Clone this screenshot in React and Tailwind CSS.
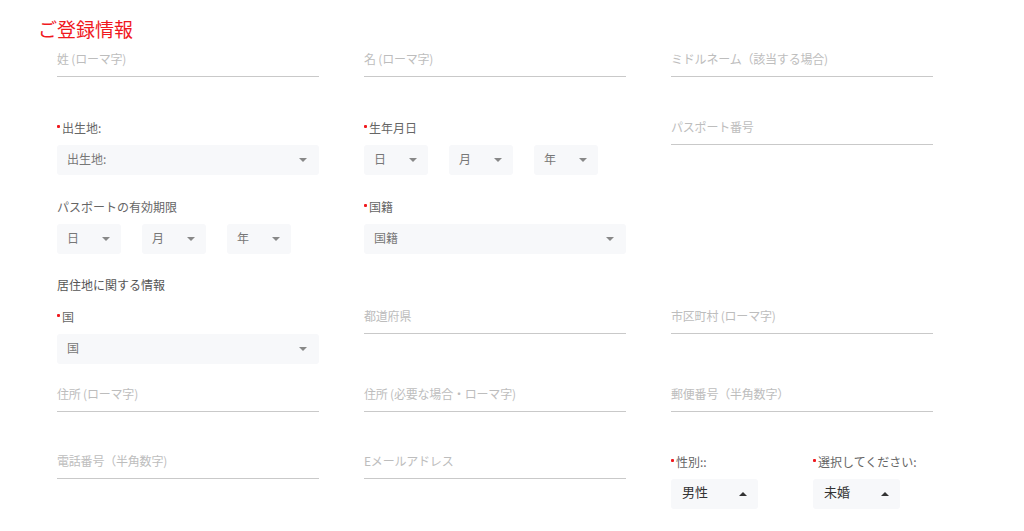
import React from "react";

const font = { fontFamily: '"Noto Sans CJK JP", "Noto Sans", sans-serif' };

const Caret = ({ up }) => (
  <span
    className={`inline-block w-0 h-0 border-l-[4px] border-r-[4px] border-l-transparent border-r-transparent ${
      up ? "border-b-[4px] border-b-[#333]" : "border-t-[4px] border-t-[#888]"
    }`}
  />
);

const Line = ({ text }) => (
  <div className="h-[33px] flex items-center pb-[2px] border-b border-[#c9c9c9] text-[12px] tracking-[-0.2px] text-[#bdbdbd]">
    {text}
  </div>
);

const Label = ({ text, req }) => (
  <div className="h-[33px] flex items-center pb-[2px] text-[12px] text-[#666]">
    {req && <span className="inline-block w-[3px] h-[3px] rounded-[1px] bg-[#f0191e] mr-[2px] -mt-[3px]" />}
    {text}
  </div>
);

const Select = ({ text, w = "w-full", pr = "pr-[12px]" }) => (
  <div className={`${w} h-[30px] bg-[#f7f8fa] rounded-[3px] flex items-center justify-between pb-[3px] pl-[10px] ${pr} text-[12px] text-[#777]`}>
    <span>{text}</span>
    <span className="pt-[3px] flex">
      <Caret />
    </span>
  </div>
);

const Dates = () => (
  <div className="flex gap-[21px]">
    {["日", "月", "年"].map((t) => (
      <Select key={t} text={t} w="w-[64px]" pr="pr-[11px]" />
    ))}
  </div>
);

const SmallSelect = ({ text }) => (
  <div className="w-[87px] h-[30px] bg-[#f7f8fa] rounded-[3px] flex items-center justify-between pl-[11px] pr-[11px] text-[13px] text-[#333]">
    <span className="pb-[4px]">{text}</span>
    <Caret up />
  </div>
);

const Row = ({ className = "", children }) => (
  <div className={`grid grid-cols-[262px_262px_262px] gap-x-[45px] items-start ${className}`}>{children}</div>
);

export default function App() {
  return (
    <div className="w-[1024px] h-[531px] bg-white overflow-hidden pt-[15px] px-[38px]" style={font}>
      <h1 className="h-[28px] leading-[28px] text-[19px] text-[#f0191e]">ご登録情報</h1>
      <div className="ml-[19px]">
        <Row className="mt-[1px]">
          <Line text="姓 (ローマ字)" />
          <Line text="名 (ローマ字)" />
          <Line text="ミドルネーム（該当する場合)" />
        </Row>
        <Row className="mt-[35px]">
          <div>
            <Label text="出生地:" req />
            <Select text="出生地:" />
          </div>
          <div>
            <Label text="生年月日" req />
            <Dates />
          </div>
          <Line text="パスポート番号" />
        </Row>
        <Row className="mt-[16px]">
          <div>
            <Label text="パスポートの有効期限" />
            <Dates />
          </div>
          <div>
            <Label text="国籍" req />
            <Select text="国籍" />
          </div>
          <div />
        </Row>
        <div className="mt-[16px] h-[31px] flex items-center pb-[2px] text-[12px] text-[#555]">居住地に関する情報</div>
        <Row>
          <div>
            <Label text="国" req />
            <Select text="国" />
          </div>
          <Line text="都道府県" />
          <Line text="市区町村 (ローマ字)" />
        </Row>
        <Row className="mt-[15px]">
          <Line text="住所 (ローマ字)" />
          <Line text="住所 (必要な場合・ローマ字)" />
          <Line text="郵便番号（半角数字）" />
        </Row>
        <Row className="mt-[34px]">
          <Line text="電話番号（半角数字)" />
          <Line text="Eメールアドレス" />
          <div className="flex gap-[55px]">
            <div>
              <Label text="性別::" req />
              <SmallSelect text="男性" />
            </div>
            <div>
              <Label text="選択してください:" req />
              <SmallSelect text="未婚" />
            </div>
          </div>
        </Row>
      </div>
    </div>
  );
}
